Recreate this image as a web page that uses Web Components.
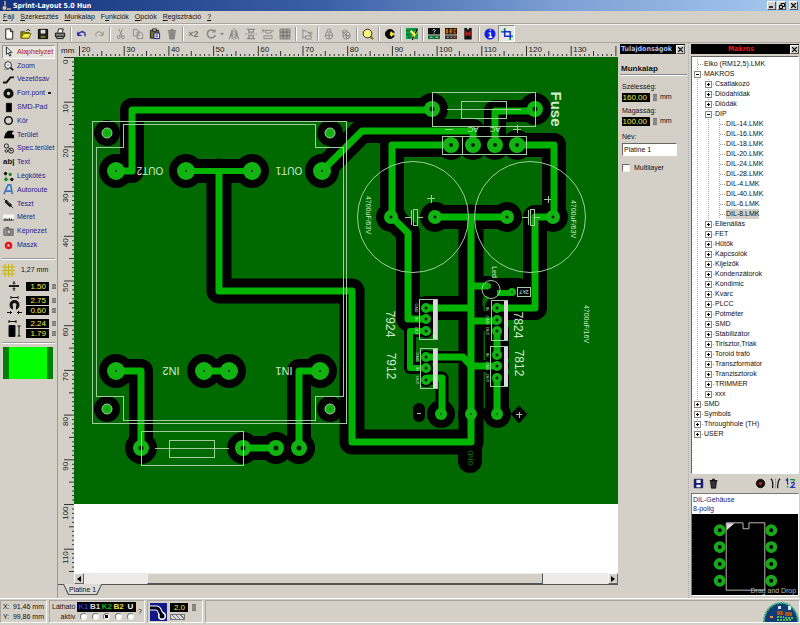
<!DOCTYPE html>
<html lang="hu">
<head>
<meta charset="utf-8">
<title>Sprint-Layout 5.0 Hun</title>
<style>
html{height:100%}
body{margin:0;height:100%;background:#d4d0c8;color:#111;font:7px/10px "Liberation Sans",sans-serif;--bold:bold 7px/10px "DejaVu Sans Condensed","DejaVu Sans",sans-serif;overflow:hidden}
</style>
</head>
<body>
<sprint-app></sprint-app>
<script>
const BASE = `
*{box-sizing:border-box}
button,input{font:inherit;color:inherit;margin:0;padding:0}
button{background:none;border:0;cursor:default}
svg{display:block}
.x{width:9px;height:9px;background:#d4d0c8;border:1px solid;border-color:#fff #555 #555 #fff;display:grid;place-items:center;flex:none}
.lcd{background:#000;color:#eeee50;border:0;text-align:right;font:8px/9px "Liberation Sans",sans-serif;height:9px;padding:0 3px 0 0;min-width:0}
.spin{width:4px;height:7px;background:#8b8983;border:1px solid #777;border-width:1px 0;flex:none}
`;
function define(name, css, html) {
  customElements.define(name, class extends HTMLElement {
    constructor() {
      super();
      const t = document.createElement('template');
      t.innerHTML = `<style>${BASE}${css}</style>${html}`;
      this.attachShadow({ mode: 'open' }).append(t.content.cloneNode(true));
    }
  });
}
const icon = (body, w = 13) => `<svg width="${w}" height="${w}" viewBox="0 0 13 13" fill="none" stroke="#111" aria-hidden="true">${body}</svg>`;
const cross = '<svg width="5" height="5" viewBox="0 0 5 5" stroke="#000" stroke-width="1.2"><path d="M0 0L5 5M5 0L0 5"/></svg>';
const spin = '<span class="spin"></span>';

/* ---------- title bar ---------- */
define('title-bar', `
:host{display:flex;align-items:center;height:11px;padding:0 2px 0 1px;background:linear-gradient(90deg,#16327e,#3a5fa6 40%,#7d9fd4 70%,#a6caf0);color:#fff;gap:1px}
h1{font:var(--bold);margin:0 auto 0 1px}
.x:last-child{margin-left:2px}`,
`<svg width="10" height="10" viewBox="0 0 10 10"><path d="M3 0h2v5h-2z" fill="#9a9a9a"/><circle cx="3.5" cy="7" r="2.3" fill="#ccc" stroke="#555"/><path d="M6 7h4v2H6z" fill="#999"/></svg>
<h1>Sprint-Layout 5.0 Hun</h1>
<button class="x" aria-label="Minimize"><svg width="5" height="5"><path d="M0 4h4" stroke="#000" stroke-width="1.5"/></svg></button>
<button class="x" aria-label="Restore"><svg width="6" height="6" fill="none" stroke="#000"><path d="M2 2V.5h3.500v3H4M.5 2.500h3v3h-3z"/></svg></button>
<button class="x" aria-label="Close">${cross}</button>`);

/* ---------- menu ---------- */
define('menu-bar', `
:host{display:flex;gap:6px;height:13px;padding:0 3px;align-items:center;border-bottom:1px solid #aaa69e}
u{text-decoration-thickness:1px;text-underline-offset:1px}`,
['<u>F</u>ájl', '<u>S</u>zerkesztés', '<u>M</u>unkalap', 'F<u>u</u>nkciók', '<u>O</u>pciók', '<u>R</u>egisztráció', '<u>?</u>'].map(t => `<button>${t}</button>`).join(''));

/* ---------- toolbar ---------- */
const G = 'stroke="#8b8983"';
const T = {
  new: '<path d="M3 1h5l2.500 2.500v8.500H3z" fill="#fff"/><path d="M8 1v3h3"/>',
  open: '<path d="M1 4h4l1 1h4v6H1z" fill="#8a8500" stroke="#555500"/><path d="M1 11l3-5h8l-2.500 5z" fill="#f7ea4c" stroke="#6a6500"/><path d="M7 2.500q2-2 4 .5"/>',
  save: '<path d="M1.500 1.500h10v10h-10z" fill="#222" stroke="#000"/><path d="M4 2h5v4H4z" fill="#ddd" stroke="none"/><path d="M4 8.500h5V11H4z" fill="#72721a" stroke="none"/>',
  print: '<path d="M4 5l1-4h5l-1 4" fill="#fff"/><path d="M1.500 5.500h10v4h-10z" fill="#777"/><path d="M3 9.500h7v2H3z" fill="#ddd"/>',
  undo: '<path d="M2 4v4h4M2.500 7q3-5 7-1.500q1 1.500 0 3.500" stroke="#2222a8" stroke-width="1.4"/>',
  redo: `<path d="M11 4v4H7M10.500 7q-3-5-7-1.500q-1 1.500 0 3.500" ${G}/>`,
  cut: `<path d="M4 1l4 8M8 1L5 9" ${G}/><circle cx="4" cy="10" r="1.600" ${G}/><circle cx="8.500" cy="10" r="1.600" ${G}/>`,
  copy: `<path d="M1.500 1.500h4l2 2v5h-6zM5.500 4.500h4l2 2v5h-6z" ${G} fill="#d4d0c8"/>`,
  paste: '<path d="M1.500 2.500h9v8.500h-9z" fill="#77721c" stroke="#222"/><path d="M4 1h4v2.500H4z" fill="#ddd"/><path d="M5.500 5.500h6v6h-6z" fill="#fff" stroke="#1a1a80"/><path d="M7 7.500h3M7 9.500h3" stroke="#1a1a80"/>',
  trash: `<path d="M3 4h7l-1 8H4z" fill="#8b8983" ${G}/><path d="M2 3h9M5 1.500h3" ${G} stroke-width="1.400"/>`,
  rot: `<path d="M10 3.500A4.300 4.300 0 1 0 11 7.500" ${G} stroke-width="1.800"/><path d="M11.500 1v4h-4z" fill="#8b8983" stroke="none"/>`,
  mirH: `<path d="M6.500 0v13" stroke-dasharray="2 1" ${G}/><path d="M1.500 12l3-10v10M3 8h2M8.500 12V2l3 10M8 8h3" ${G} stroke-width="1.300"/>`,
  mirV: `<path d="M0 6.500h13" stroke-dasharray="2 1" ${G}/><path d="M2 1.500h9M4 1.500v3h5v-3M2 11.500h9M4 11.500v-3h5v3" ${G} stroke-width="1.300"/>`,
  align: `<path d="M1 1v4M0 3h4M4 2.500h6v3H4zM2 8.500h9v3H2zM11 3h2" ${G}/>`,
  snap: `<path d="M1 1h11v11H1z" fill="#a8a59d" ${G}/><path d="M1 4.500h11M1 8.500h11M4.500 1v11M8.500 1v11" stroke="#6f6d68"/>`,
  group: `<path d="M2 1v11M2 3h4M2 10h3M6 4l5 2" ${G}/><circle cx="10.500" cy="6" r="1.500" ${G}/><path d="M5 8.500h6V12H5z" ${G}/>`,
  lock: `<circle cx="6.500" cy="8" r="4" ${G}/><path d="M4 5q0-4 2.500-4t2.500 4M2.500 8h8M6.500 5v7" ${G}/>`,
  unlock: `<circle cx="7" cy="8" r="4" ${G}/><path d="M3 6q-1-4 2-4t3 3M3 8h8M7 5v7M2 3l8 8" ${G}/>`,
  zoom: '<path d="M9 9l3 3" stroke="#8a7a20" stroke-width="2.500"/><circle cx="6" cy="6" r="4.700" fill="#fbf47a" stroke="#222"/>',
  contrast: '<circle cx="6.500" cy="6.500" r="5" fill="#000"/><path d="M8 3.500a3.500 3.500 0 0 0 0 6q4-3 0-6z" fill="#f4ea2c" stroke="none"/><path d="M10 5h3v3h-3z" fill="#d4d0c8" stroke="none"/>',
  photo: '<path d="M0 0h13v12H0z" fill="#0ba04a" stroke="none"/><path d="M0 3h6M0 7h5M2 10h4M7 2h6" stroke="#053"/><path d="M5 3l4 4 3-4M9 7l-2 5" stroke="#fff04a" stroke-width="2.500"/><path d="M10 6l2-4M8 9l-1 4" stroke="#000" stroke-width="1.400"/>',
  help: '<path d="M0 0h13v7H0z" fill="#111" stroke="none"/><path d="M0 8h13v4H0z" fill="#176a36" stroke="none"/><path d="M5 2.500q1.500-2 3 0q0 1-1.500 1.800M6.500 5v1" stroke="#cde"/><path d="M2 10h3M8 10h3" stroke="#9ec"/>',
  drc: '<path d="M0 0h13v7H0z" fill="#221400" stroke="none"/><path d="M1.500 1.500v4h1q1-2 0-4zM5.500 6V1.500H7.500v2h-2l2 2.500M12 1.500h-2v4h2" stroke="#e8821e"/><path d="M0 8h13v4H0z" fill="#333" stroke="none"/><path d="M2 10h2M6 10h2" stroke="#7fdc9a"/><path d="M9 8.500l3 3M12 8.500l-3 3" stroke="#e33"/>',
  mac: '<path d="M2.500 0h3v1.500h2V0h3v12.500h-8z" fill="#111" stroke="none"/><path d="M4.500 9V4.500l2 2.500 2-2.500V9" stroke="#e01818" stroke-width="1.400"/>',
  info: '<circle cx="6.500" cy="6.500" r="6" fill="#1020e8" stroke="none"/><path d="M5 5.500h2v4M5 10h4M6.200 2.500h1.500" stroke="#fff" stroke-width="1.500"/>',
  crop: '<path d="M1 4h9v8M4 1v8h8" stroke="#1530d0" stroke-width="1.600"/><path d="M0 4h3M4 0v2M10 11v2M11 9h2" stroke="#12a050" stroke-width="2"/>'
};
const bar = ['new', 'open', 'save', 'print', '|', 'undo', 'redo', '|', 'cut', 'copy', 'paste', 'trash', '|', 'x2', 'rot', 'v', 'mirH', 'mirV', 'align', 'snap', '|', 'group', '|', 'lock', 'unlock', '|', 'zoom', '|', 'contrast', '|', 'photo', '|', 'help', 'drc', 'mac', '|', 'info', 'crop'];
define('tool-bar', `
:host{display:flex;align-items:center;height:19px;border-bottom:1px solid #aaa69e;border-top:1px solid #f4f2ee}
button{width:17px;height:17px;display:grid;place-items:center;flex:none}
i{width:1px;height:14px;margin:0 2px;background:#999;flex:none;box-shadow:1px 0 #fff}
.v{width:6px}.x2{font:bold 9px/12px "Liberation Sans",sans-serif;color:#77756f}
.crop{border:1px solid;border-color:#888 #fff #fff #888;background:#e9e7e2}`,
bar.map(k => k === '|' ? '<i></i>' : k === 'x2' ? '<button class="x2">×2</button>' :
  k === 'v' ? '<button class="v" aria-label="more"><svg width="4" height="2"><path d="M0 0h4l-2 2z" fill="#777"/></svg></button>' :
  `<button class="${k}" aria-label="${k}">${icon(T[k], 12)}</button>`).join(''));

/* ---------- left tool box ---------- */
const tools = [
  ['Alaphelyzet', '<path d="M4 1v9l2-2 2 4 1.500-1-2-3.500h3z" fill="#fff"/>'],
  ['Zoom', '<circle cx="6" cy="6" r="4" fill="#e8f2f4"/><path d="M9 9l3 3" stroke-width="2"/><path d="M1 11h6M4.500 6h3" stroke="#777"/>'],
  ['Vezetősáv', '<path d="M0 10h4l5-6h4" stroke-width="2.200"/>'],
  ['Forr.pont', '<circle cx="6.500" cy="6.500" r="4" stroke-width="4"/>'],
  ['SMD-Pad', '<path d="M4 1.500h6v10H4z" fill="#000"/>'],
  ['Kör', '<circle cx="6.500" cy="6.500" r="4.500" stroke-width="1.700"/>'],
  ['Terület', '<path d="M1 11l2-6 3-3h7q-5 4 0 5v4z" fill="#000" stroke="none"/>'],
  ['Spec.terület', '<circle cx="4" cy="3.500" r="2.500"/><circle cx="9.500" cy="9" r="3"/><circle cx="4" cy="9.500" r="1.500"/><path d="M6 5l3 3M8 9h3"/>'],
  ['Text', ''],
  ['Légkötés', '<path d="M3 3l1 7 7-1" stroke="#9a9"/><circle cx="3" cy="3" r="1.500" fill="#000"/><circle cx="8.500" cy="4" r="1.500" fill="#181" stroke="#181"/><circle cx="3.500" cy="10" r="1.600" fill="#181" stroke="#181"/><circle cx="10.500" cy="10" r="1.500" fill="#000"/>'],
  ['Autoroute', '<path d="M1 12L6 1h3l2 11M3.500 8.500h6" stroke="#3f78c4" stroke-width="2"/>'],
  ['Teszt', '<path d="M1 1l3 3M9 9l3 3"/><path d="M3 3.500l6.500 6" stroke-width="3.500"/><path d="M5 4l3 3" stroke="#4b6"/>'],
  ['Méret', '<path d="M0 3h13v7H0z" fill="#f6f6f2" stroke="none"/><path d="M0 9.500h13M2.500 7v3M5 8v2M7.500 7v3M10 8v2"/>'],
  ['Képnézet', '<path d="M1 3.500h11v7.500H1z" fill="#999" stroke="#555"/><circle cx="7" cy="7" r="2.500" fill="#ccc" stroke="#444"/><path d="M3 2h4"/>'],
  ['Maszk', '<circle cx="6.500" cy="6.500" r="3" stroke="#e8141c" stroke-width="3"/>']
];
const lcd = (v, l, w = 23) => `<input class="lcd" style="width:${w}px" value="${v}" aria-label="${l}">${spin}`;
define('tool-box', `
:host{display:block;width:58px;border-right:1px solid #999;padding:2px 2px 0;flex:none}
nav{display:grid;grid-auto-rows:1fr;height:207px;margin-bottom:6px}
nav button{display:flex;align-items:center;gap:3px;text-align:left;color:#22228c;border:1px solid transparent;white-space:nowrap}
nav svg,nav b{width:11px;height:11px;flex:none}
nav b{font:bold 8px/10px "Liberation Sans",sans-serif;color:#111}
nav button:first-child{color:#b01818;background:#e6e4df;border-color:#999 #fff #fff #999}
.dd{margin-left:auto;margin-right:3px;width:3px;height:2px;background:#222}
hr{border:0;border-top:1px solid #999;border-bottom:1px solid #fff;margin:0}
.grid{display:flex;gap:6px;align-items:center;height:20px}
.set{display:grid;grid-template-columns:24px 1fr;align-items:center;margin-bottom:4px}
.set svg{justify-self:center}
.set div{display:grid;grid-template-columns:23px 4px;column-gap:3px;row-gap:1px;align-items:center}
.set .spin{height:5px}
.trace{height:32px;margin:3px 2px 0 1px;background:linear-gradient(90deg,#008000 6px,#00ff00 6px,#00ff00 calc(100% - 6px),#008000 0)}`,
`<nav>${tools.map(([t, s]) => `<button>${s ? icon(s, 11) : '<b>ab|</b>'}<span>${t}</span>${t === 'Forr.pont' ? '<span class="dd"></span>' : ''}</button>`).join('')}</nav><hr>
<div class="grid">${icon('<path d="M3 0v13M6.500 0v13M10 0v13M0 3h13M0 6.500h13M0 10h13" stroke="#c4b800"/>')}<span>1,27 mm</span></div>
<div class="set">${icon('<path d="M1 6.500h11" stroke-width="2"/><path d="M6.500 1v4M6.500 12V8M5 3.500h3M5 9.500h3"/>', 12)}<div>${lcd('1.50', 'Vezetősáv')}</div></div>
<div class="set"><svg width="15" height="19" viewBox="0 0 15 19" fill="none" stroke="#111"><path d="M4 1.500h7M4 0v3M11 0v3"/><circle cx="7.500" cy="9" r="3.500" stroke-width="3"/><path d="M6 10h3v6H6z" fill="#d4d0c8" stroke="none"/><path d="M0 16.500h5M10 16.500h5M3.500 15v3M11.500 15v3"/></svg><div>${lcd('2.75', 'Átmérő')}${lcd('0.60', 'Furat')}</div></div>
<div class="set"><svg width="13" height="18" viewBox="0 0 13 18" fill="none" stroke="#111"><path d="M1 1.500h7M1 0v3M8 0v3M11 6v10M9.500 6h3M9.500 16h3"/><path d="M1 5.500h6v11H1z" fill="#000"/></svg><div>${lcd('2.24', 'Szélesség')}${lcd('1.79', 'Magasság')}</div></div>
<hr><div class="trace"></div>`);

/* ---------- board ---------- */
const MM = 447 / 100;
/* ticks every millimetre; a label every 10 mm, up to lastLabel */
function ticks(from, to, lastLabel, origin, base, vertical) {
  let d = '', t = '';
  for (let m = from; m <= to; m++) {
    const p = (origin + (m - from) * MM).toFixed(1);
    const len = m % 10 === 0 ? 10 : m % 5 === 0 ? 5 : 2;
    d += vertical ? `M${base} ${p}h-${len}` : `M${p} ${base}v-${len}`;
    if (m % 10 === 0 && m <= lastLabel) t += vertical
      ? `<text transform="translate(8 ${+p + 2}) rotate(-90)" text-anchor="end">${m}</text>`
      : `<text x="${+p + 2}" y="8">${m}</text>`;
  }
  return `<path d="${d}" stroke="#333" fill="none"/><g>${t}</g>`;
}
/* copper tracks: [path, copper width, clearance width] */
const tracks = [
  ['M116 171H132V110H432', 7, 24], ['M186 171H252', 6, 24], ['M219 171V291H352V442H471V217', 7, 25],
  ['M322 171L362 131H473V145', 7, 24], ['M451 145H392V217L408 233V319H426', 7, 24],
  ['M435 217H507', 7, 24], ['M517 145H554V217H535V308H497', 7, 24], ['M495 145V111H535', 7, 22],
  ['M426 308H471', 7, 24], ['M471 321H497M471 286H488', 7, 20], ['M426 357H463L471 366H497', 7, 12],
  ['M426 331H410V368H426', 6, 12], ['M426 378H442V413', 7, 13], ['M497 331V355M497 378V414', 7, 24],
  ['M497 293H512', 6, 20], ['M116 371H141V448', 7, 24], ['M204 371H229', 7, 24], ['M320 371H299V448', 7, 24], ['M243 448H276', 7, 24]
];
/* pads: [x, y, radius, clearance radius, drill radius] */
const pads = [
  [116, 171, 9, 17, 1], [186, 171, 9, 17, 1], [252, 171, 9, 17, 1], [322, 171, 9, 17, 1],
  [116, 371, 9, 17, 1], [204, 371, 9, 17, 1], [229, 371, 9, 17, 1], [320, 371, 9, 17, 1],
  [107, 133, 5, 13, .5], [330, 133, 5, 13, .5], [107, 409, 5, 13, .5], [330, 409, 5, 13, .5],
  [432, 109, 8, 16, 2.5], [535, 109, 8, 16, 2.5], [451, 145, 8, 15, 2], [473, 145, 8, 15, 2], [495, 145, 8, 15, 2], [517, 145, 8, 15, 2],
  [391, 217, 7, 15, 1.5], [435, 217, 7, 15, 1.5], [507, 217, 7, 15, 1.5], [553, 217, 7, 15, 1.5],
  [141, 448, 8, 16, 2.5], [243, 448, 8, 16, 2.5], [276, 448, 8, 16, 2.5], [299, 448, 8, 16, 2.5],
  [426, 308, 5, 7, 1.5], [426, 319, 5, 7, 1.5], [426, 331, 5, 7, 1.5], [426, 357, 5, 7, 1.5], [426, 368, 5, 7, 1.5], [426, 380, 5, 7, 1.5],
  [497, 308, 5, 8, 1.5], [497, 320, 5, 8, 1.5], [497, 331, 5, 10, 1.5], [497, 355, 5, 12, 1.5], [497, 366, 5, 12, 1.5], [497, 378, 5, 12, 1.5],
  [441, 414, 6, 14, .8], [471, 414, 6, 13, .8], [497, 414, 6, 14, .8], [488, 286, 3, 10, .6], [512, 292, 4, 10, .8]
];
/* silk labels: [text, centre x, centre y, rotation, size, class] */
const labels = [
  ['OUT2', 150, 171, 180, 10], ['OUT1', 289, 171, 180, 10], ['IN2', 171, 371, 180, 11], ['IN1', 284, 371, 180, 11],
  ['AC', 473, 130, 180, 8], ['AC', 495, 130, 180, 8], ['Fuse', 556, 109, 90, 15, 'b'],
  ['7924', 390, 324, 90, 12], ['7912', 391, 366, 90, 12], ['7824', 518, 325, 90, 12], ['7812', 519, 363, 90, 12],
  ['4700uF/63V', 369, 215, 90, 7], ['4700uF/63V', 574, 219, 90, 7], ['4700uF/16V', 587, 324, 90, 7], ['Led', 495, 272, 90, 7],
  ['GND', 416, 308, 90, 4], ['IN', 416, 319, 90, 4], ['OUT', 416, 331, 90, 4], ['GND', 417, 357, 90, 4], ['IN', 417, 369, 90, 4], ['OUT', 417, 380, 90, 4],
  ['IN', 487, 309, 90, 4], ['GND', 487, 320, 90, 4], ['OUT', 487, 331, 90, 4], ['IN', 487, 355, 90, 4], ['GND', 487, 366, 90, 4], ['OUT', 487, 378, 90, 4],
  ['2k7', 524, 292, 180, 6], ['GND', 470, 458, -90, 7, 'g']
];
const board = `<svg class="board" width="544" height="447" viewBox="74 57 544 447" role="img" aria-label="Platine 1">
<path fill="#006a00" d="M74 57h544v447H74z"/>
<g fill="none" stroke="#000" stroke-linejoin="round" stroke-linecap="round">${tracks.map(t => `<path d="${t[0]}" stroke-width="${t[2]}"/>`).join('')}
<path d="M470 442V461" stroke-width="24"/><path d="M419 409V416" stroke-width="12"/><path d="M497 289H518" stroke-width="22"/></g>
<path d="M519 407l7 7-7 8-7-8z" stroke="#000" stroke-width="2" stroke-linejoin="round"/>
${pads.map(p => `<circle cx="${p[0]}" cy="${p[1]}" r="${p[3]}"/>`).join('')}
<path d="M483 299h3l-3 7zM484.500 334V343M484.500 372V400" fill="#006a00" stroke="#006a00"/>
<g fill="none" stroke="#00b400" stroke-linejoin="round">${tracks.map(t => `<path d="${t[0]}" stroke-width="${t[1]}"/>`).join('')}</g>
${pads.map(p => `<circle cx="${p[0]}" cy="${p[1]}" r="${p[2]}" fill="#12b412"/><circle cx="${p[0]}" cy="${p[1]}" r="${p[4]}" fill="#002800"/>`).join('')}
<g fill="none" stroke="#a0cca0" stroke-width="1" shape-rendering="crispEdges">
<path d="M92.500 121.500H346.500V423.500H92.500zM123.500 124.500H315.500V147.500H343.500V396.500H315.500V420.500H123.500V396.500H96.500V147.500H123.500z"/>
<path d="M432.500 92.500H535.500V126.500H432.500zM461.500 101.500H506.500V118.500H461.500zM447 109.500H521"/>
<path d="M141.500 431.500H243.500V465.500H141.500zM169.500 440.500H214.500V457.500H169.500zM155 448.500H229"/>
<path d="M442.500 136.500H526.500V154.500H442.500zM462.500 136V154"/>
<path d="M419.500 299.500H437.500V339.500H419.500zM420.500 348.500H437.500V388.500H420.500zM491.500 300.500H507.500V340.500H491.500zM490.500 346.500H507.500V386.500H490.500z"/>
<path d="M405 217.500H411M411.500 210V225M413.500 209.500H417.500V225.500H413.500zM418 217.500H423M522 217.500H528M528.500 210V225M530.500 209.500H534.500V225.500H530.500zM535 217.500H540M517.500 287.500H530.500V296.500H517.500z"/>
<path d="M427 198.500H435M431.500 195V203M544 199.500H551M548.500 196V203M513 129.500H521M517.500 125V133M445 129.500H453"/>
<path d="M417 413.500H421M516 414.500H522M519.500 412V418"/></g>
<g fill="none" stroke="#a0cca0"><circle cx="413" cy="217" r="55.500"/><circle cx="530" cy="217" r="55.500"/><circle cx="491" cy="289.500" r="9"/>
<circle cx="107" cy="133" r="5"/><circle cx="330" cy="133" r="5"/><circle cx="107" cy="409" r="5"/><circle cx="330" cy="409" r="5"/></g>
<path d="M433 300h4v39h-4zM433 349h4v39h-4zM504 301h4v39h-4zM504 347h4v39h-4z" fill="#dcd8dc"/>
${labels.map(l => `<text class="${l[5] || ''}" transform="translate(${l[1]} ${l[2]}) rotate(${l[3]})" font-size="${l[4]}" y="${Math.round(l[4] * .36)}" text-anchor="middle">${l[0]}</text>`).join('')}
</svg>`;
define('board-view', `
:host{display:grid;grid-template:13px 1fr 11px 14px / 14px minmax(0,1fr);flex:1;min-width:0;padding:1px 0 0 2px;overflow:hidden}
.unit{padding-left:1px;font-size:8px;line-height:13px}
.h,.v{overflow:hidden;min-width:0;min-height:0}
.h text,.v text{font:8px "Liberation Sans",sans-serif;fill:#222}
.canvas{background:#fff;overflow:hidden;min-height:0}
.board text{font-family:"Liberation Sans",sans-serif;fill:#cfeacf}
.board .b{font-weight:bold}.board .g{fill:#0a7a0a}
.scroll{grid-column:2;display:flex;background:#eceae6}
.scroll button{background:#d4d0c8;border:1px solid;border-color:#fff #666 #666 #fff;display:grid;place-items:center}
.arrow{width:10px;flex:none}.thumb{flex:397;border-color:#eee #555 #555 #eee!important}.a{flex:63}.b2{flex:65}
.tabs{grid-column:1/3;border-top:1px solid #555;margin-left:-2px;padding-left:5px;display:flex}
.tab{height:11px;padding:0 6px;margin-top:-1px;background:#555;clip-path:polygon(0 0,100% 0,calc(100% - 5px) 100%,5px 100%);position:relative;z-index:0}
.tab::before{content:"";position:absolute;inset:0 1px 1px;background:#dedbd5;z-index:-1;clip-path:polygon(0 0,100% 0,calc(100% - 5px) 100%,5px 100%)}`,
`<div class="unit">mm</div>
<div class="h"><svg width="544" height="13">${ticks(20, 141, 130, 5.5, 12, false)}</svg></div>
<div class="v"><svg width="14" height="515">${ticks(0, 115, 110, .5, 14, true)}</svg></div>
<div class="canvas">${board}</div>
<div class="scroll"><button class="arrow" aria-label="Balra"><svg width="4" height="6"><path d="M4 0v6L0 3z"/></svg></button><span class="a"></span><button class="thumb" aria-label="Görgetés"></button><span class="b2"></span><button class="arrow" aria-label="Jobbra"><svg width="4" height="6"><path d="M0 0v6l4-3z"/></svg></button></div>
<div class="tabs"><button class="tab">Platine 1</button></div>`);

/* ---------- panels ---------- */
define('panel-title', `
:host{display:flex;align-items:center;background:#000;color:#a8b8f0;height:10px;padding-left:1px;font:var(--bold);white-space:nowrap}
span{flex:1;text-align:var(--align,left)}`, `<span><slot></slot></span><button class="x" aria-label="Bezárás">${cross}</button>`);

define('properties-panel', `
:host{display:block;width:70px;flex:none;padding:1px 3px 0 2px}
h2{font:bold 8px/10px "Liberation Sans",sans-serif;margin:10px -2px 7px 0;border-bottom:1px solid #888;box-shadow:0 1px #fff;padding-left:1px}
.f{display:block;margin:0 2px 4px;line-height:10px}
.f div{display:flex;align-items:center;gap:3px}
.f.n{margin-top:6px}
.t{display:block;width:55px;height:13px;margin-top:1px;padding:0 1px;background:#fff;border:1px solid;border-color:#666 #fff #fff #666}
.c{display:flex;align-items:center;gap:4px;margin:7px 2px}
.c input{appearance:none;width:8px;height:8px;background:#fff;border:1px solid;border-color:#666 #eee #eee #666}`,
`<panel-title>Tulajdonságok</panel-title><h2>Munkalap</h2>
<label class="f">Szélesség:<div>${lcd('160.00', 'Szélesség', 28)}mm</div></label>
<label class="f">Magasság:<div>${lcd('100.00', 'Magasság', 28)}mm</div></label>
<label class="f n">Név:<input class="t" value="Platine 1"></label>
<label class="c"><input type="checkbox">Multilayer</label>`);

const tree = [
  [0, '', 'Elko (RM12,5).LMK'], [0, '-', 'MAKROS'], [1, '+', 'Csatlakozó'], [1, '+', 'Diódahidak'], [1, '+', 'Diódák'], [1, '-', 'DIP'],
  ...[14, 16, 18, 20, 24, 28, 4, 40, 6, 8].map(n => [2, '', `DIL-${n}.LMK`]),
  ...['Ellenállás', 'FET', 'Hűtők', 'Kapcsolók', 'Kijelzők', 'Kondenzátorok', 'Kondimic', 'Kvarc', 'PLCC', 'Potméter', 'SMD', 'Stabilizátor', 'Tirisztor,Triak', 'Toroid trafó', 'Transzformátor', 'Tranzisztorok', 'TRIMMER', 'xxx'].map(n => [1, '+', n]),
  [0, '+', 'SMD'], [0, '+', 'Symbols'], [0, '+', 'Throughhole (TH)'], [0, '+', 'USER']
];
define('macro-tree', `
:host{display:block;background:#fff;border:1px solid;border-color:#666 #fff #fff #666;padding:2px 0;overflow:hidden}
ul{list-style:none;margin:0;padding:0}
li{display:flex;height:10px;white-space:nowrap;line-height:10px}
i,.n{width:11px;flex:none;background:repeating-linear-gradient(#aaa 0 1px,#fff 1px 2px) 5px 0/1px 100% no-repeat}
.n{display:grid;place-items:center;position:relative;margin-right:1px}
.n::after{content:"";position:absolute;left:6px;right:0;top:5px;border-top:1px dotted #999}
.n button{width:7px;height:7px;border:1px solid #888;z-index:1;background:linear-gradient(#000,#000) center/3px 1px no-repeat,#fff}
.n .p{background:linear-gradient(#000,#000) center/3px 1px no-repeat,linear-gradient(#000,#000) center/1px 3px no-repeat,#fff}
.sel{background:#d4d0c8}`,
`<ul>${tree.map(([d, k, t]) => `<li>${'<i></i>'.repeat(d)}<span class="n">${k ? `<button class="${k === '+' ? 'p' : ''}" aria-label="${t}"></button>` : ''}</span><span class="${t === 'DIL-8.LMK' ? 'sel' : ''}">${t}</span></li>`).join('')}</ul>`);

define('macro-panel', `
:host{display:flex;flex-direction:column;width:112px;flex:none;padding:1px 1px 2px 2px;border-left:1px dotted #aaa}
panel-title{color:#f01414;--align:center;margin-bottom:2px}
macro-tree{flex:1;min-height:0}
.tools{display:flex;align-items:center;gap:3px;height:19px;padding:0 2px}
.tools button{width:12px}.tools span{flex:1}
.prev{border:1px solid;border-color:#777 #fff #fff #777;display:flex;flex-direction:column}
.name{background:#fff;color:#22227a;height:20px;line-height:9px;padding:1px}
.pic{background:#000;display:flex;justify-content:center}
text{font:7px "Liberation Sans",sans-serif;fill:#b8b8b8}`,
`<panel-title>Makros</panel-title><macro-tree></macro-tree>
<div class="tools"><button aria-label="Mentés">${icon('<path d="M1.500 1.500h10v10h-10z" fill="#181878" stroke="#101050"/><path d="M4 2h5v4H4zM4 8h5v3H4z" fill="#eee" stroke="none"/>', 11)}</button>
<button aria-label="Törlés">${icon('<path d="M3 4h7l-1 8H4z" fill="#333"/><path d="M2 3h9M5 1.500h3" stroke-width="1.500"/>', 11)}</button><span></span>
<button aria-label="Réteg">${icon('<circle cx="6.500" cy="6.500" r="5" fill="#111"/><circle cx="6.500" cy="6.500" r="1.500" fill="#c22" stroke="#c22"/>', 11)}</button>
<button aria-label="Tükrözés">${icon('<path d="M1 1q3 2 2 11M12 1q-3 2-3 11" stroke-width="1.500"/><path d="M6.500 1v11" stroke="#77c" stroke-dasharray="2 1"/>', 11)}</button>
<button aria-label="Csere">${icon('<path d="M1 3l2-2v7M7 6q4-2 4 1l-4 4h5" stroke="#2030b0" stroke-width="1.400"/><path d="M6 2h5v2M2 10l2 1" stroke="#1a8a3a" stroke-width="1.400"/>', 11)}</button></div>
<div class="prev"><div class="name">DIL-Gehäuse<br>8-polig</div><div class="pic"><svg width="107" height="81" viewBox="0 0 107 81"><path d="M34.500 8.500H51.500V14.500H57.500V8.500H73.500V76.500H34.500z" fill="none" stroke="#bbb"/><path d="M35 9h8l-8 7z" fill="#ddd"/><g fill="none" stroke="#18a818" stroke-width="4">${[16, 33, 50, 67].map(y => `<circle cx="28" cy="${y}" r="4"/><circle cx="80" cy="${y}" r="4"/>`).join('')}</g><text x="105" y="79" text-anchor="end">Drag and Drop</text></svg></div></div>`);

/* ---------- status bar ---------- */
const layers = [['K1', '#3030d0'], ['B1', '#ddd'], ['K2', '#18b428'], ['B2', '#e8e030'], ['U', '#fff']];
define('status-bar', `
:host{display:flex;height:27px;border-top:1px solid #fff;padding:1px 0 2px;gap:2px;line-height:10px;white-space:nowrap}
section{border:1px solid;border-color:#aaa69e #fff #fff #aaa69e;display:flex;align-items:center;flex:none;padding:0 2px}
.xy{width:47px;display:grid;grid-template-columns:auto auto;justify-content:space-between;align-content:center}
.xy span:nth-child(even){text-align:right}
.ly{width:96px;gap:2px}
.ly table{border-spacing:0;width:84px;flex:none}
td,th{padding:0;font-weight:normal;text-align:center;height:10px;width:12px}th{text-align:right;padding-right:2px;width:24px}
td.k{background:#000;font:bold 8px/10px "Liberation Sans",sans-serif}
input[type=radio]{appearance:none;display:block;width:7px;height:7px;border-radius:50%;margin:1px auto;background:#fff;border:1px solid;border-color:#777 #eee #eee #777}
input:checked{background:radial-gradient(#000 1.5px,#fff 2px)}
.w{width:56px;gap:3px}.w div{display:grid;grid-template-columns:18px 4px;gap:2px 4px;align-items:center}
.hatch{height:6px;width:15px;background:repeating-linear-gradient(45deg,#777 0 1px,#ddd 1px 3px);border:1px solid #777}
.rest{flex:1;justify-content:flex-end;padding:0}`,
`<section class="xy"><span>X:</span><span>91,46 mm</span><span>Y:</span><span>99,86 mm</span></section>
<section class="ly"><table><tr><th>Látható</th>${layers.map(l => `<td class="k" style="color:${l[1]}">${l[0]}</td>`).join('')}</tr>
<tr><th>aktív</th>${layers.map(l => `<td><input type="radio" name="layer" aria-label="${l[0]}"${l[0] === 'K2' ? ' checked' : ''}></td>`).join('')}</tr></table><span>?</span></section>
<section class="w"><svg width="17" height="18" viewBox="0 0 17 18"><path fill="#12188a" d="M0 0h17v18H0z"/><path d="M0 5h6q3 0 4 4l2 3" fill="none" stroke="#fff" stroke-width="5"/><circle cx="12" cy="13" r="4" fill="#fff"/><path d="M0 5h6q3 0 4 4l2 3" fill="none" stroke="#001" stroke-width="3"/><circle cx="12" cy="13" r="2.500" fill="#001"/></svg>
<div>${lcd('2.0', 'Távolság', 18)}<span class="hatch"></span></div></section>
<section class="rest"><svg width="36" height="22" viewBox="0 0 36 22"><path d="M1 21A17 19 0 0 1 35 21z" fill="#123c78"/><path d="M1 21A17 19 0 0 1 35 21" fill="none" stroke="#2fae78" stroke-width="2" stroke-dasharray="2 1"/><path d="M15 5h3v3h-3zM25 5h3v4h-3z" fill="#cfe8f0"/><path d="M14 10h6v4h-6zM22 11h7v4h-7z" fill="#a8541e"/><path d="M14 16h7M22 17h8M14 19h15" stroke="#4cc04c" stroke-width="2" stroke-dasharray="2 1"/><path d="M7 16h3" stroke="#e84" stroke-width="2"/></svg></section>`);

define('sprint-app', `
:host{display:flex;flex-direction:column;height:100%}
main{flex:1;min-height:0;display:flex}`,
`<title-bar></title-bar><menu-bar></menu-bar><tool-bar></tool-bar>
<main><tool-box></tool-box><board-view></board-view><properties-panel></properties-panel><macro-panel></macro-panel></main><status-bar></status-bar>`);
</script>
</body>
</html>
